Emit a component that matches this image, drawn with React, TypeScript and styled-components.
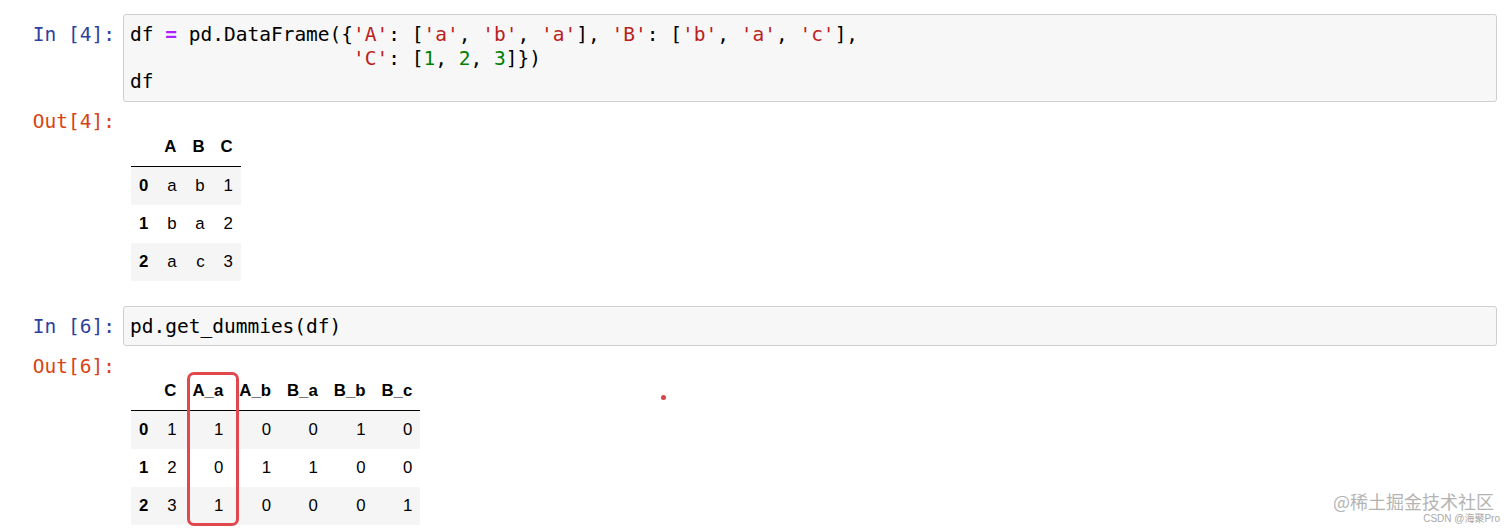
import React from "react";
import styled, { createGlobalStyle } from "styled-components";

const Global = createGlobalStyle`
  html, body { margin: 0; padding: 0; background: #fff; }
  body { font-family: "Liberation Sans", Arial, sans-serif; }
`;

const Page = styled.div`
  position: relative;
  width: 1512px;
  height: 530px;
  overflow: hidden;
  box-sizing: border-box;
  padding-top: 14px;
  background: #fff;
`;

const NotebookCell = styled.section<{ $gapAfter: number }>`
  margin-bottom: ${(p) => p.$gapAfter}px;
`;

const Row = styled.div`
  display: flex;
  align-items: flex-start;
`;

const Prompt = styled.div<{ $kind: "in" | "out"; $top: number }>`
  flex: 0 0 123px;
  box-sizing: border-box;
  padding: ${(p) => p.$top}px 8px 0 0;
  text-align: right;
  font-family: "DejaVu Sans Mono", monospace;
  font-size: 19.5px;
  line-height: 23.5px;
  white-space: pre;
  color: ${(p) => (p.$kind === "in" ? "#303F9F" : "#D84315")};
`;

const InputArea = styled.div`
  flex: 1;
  margin-right: 15px;
  background: #f7f7f7;
  border: 1px solid #cfcfcf;
  border-radius: 3px;
  padding: 8px 6px 7px;
  font-family: "DejaVu Sans Mono", monospace;
  font-size: 19.5px;
  line-height: 23.5px;
  color: #000;
  white-space: pre;
`;

const CodeLine = styled.div`
  min-height: 23.5px;
`;

const Op = styled.span`
  color: #aa22ff;
  font-weight: bold;
`;

const Str = styled.span`
  color: #ba2121;
`;

const Num = styled.span`
  color: #008000;
`;

const OutputArea = styled.div`
  flex: 1;
`;

const TableWrap = styled.div`
  position: relative;
  width: fit-content;
  margin: 26px 0 0 8px;
`;

const DataTable = styled.table`
  border-collapse: collapse;
  border-spacing: 0;
  font-family: "Liberation Sans", Arial, sans-serif;
  font-size: 16.8px;
  color: #000;
`;

const THead = styled.thead`
  border-bottom: 1px solid #000;
`;

const HeadCell = styled.th`
  padding: 8px;
  line-height: 22px;
  text-align: right;
  font-weight: bold;
  white-space: nowrap;
`;

const BodyRow = styled.tr<{ $striped: boolean }>`
  background: ${(p) => (p.$striped ? "#f5f5f5" : "transparent")};
`;

const DataCell = styled.td`
  padding: 8px;
  line-height: 22px;
  text-align: right;
`;

const ColumnMark = styled.div<{ $left: number; $width: number; $height: number }>`
  position: absolute;
  left: ${(p) => p.$left}px;
  top: 0;
  width: ${(p) => p.$width}px;
  height: ${(p) => p.$height}px;
  box-sizing: border-box;
  border: 3px solid #e0484d;
  border-radius: 7px;
  pointer-events: none;
`;

const RedDot = styled.span`
  position: absolute;
  left: 661px;
  top: 395px;
  width: 5px;
  height: 5px;
  border-radius: 50%;
  background: #d9444b;
`;

const Watermark = styled.div`
  position: absolute;
  right: 12px;
  bottom: 5px;
  display: flex;
  flex-direction: column;
  align-items: flex-end;
  gap: 2px;
  pointer-events: none;
`;

const MarkMain = styled.span`
  margin-right: 6px;
  font-family: "Noto Sans CJK SC", "Liberation Sans", sans-serif;
  font-size: 18px;
  line-height: 20px;
  color: #b4b4b4;
`;

const MarkSub = styled.span`
  font-family: "Liberation Sans", "Noto Sans CJK SC", sans-serif;
  font-size: 10px;
  line-height: 12px;
  color: #a8a8a8;
`;

type Table = { columns: string[]; rows: (string | number)[][] };

const table1: Table = {
  columns: ["A", "B", "C"],
  rows: [
    ["a", "b", 1],
    ["b", "a", 2],
    ["a", "c", 3],
  ],
};

const table2: Table = {
  columns: ["C", "A_a", "A_b", "B_a", "B_b", "B_c"],
  rows: [
    [1, 1, 0, 0, 1, 0],
    [2, 0, 1, 1, 0, 0],
    [3, 1, 0, 0, 0, 1],
  ],
};

function Frame({ data }: { data: Table }) {
  return (
    <DataTable>
      <THead>
        <tr>
          <HeadCell />
          {data.columns.map((c) => (
            <HeadCell key={c}>{c}</HeadCell>
          ))}
        </tr>
      </THead>
      <tbody>
        {data.rows.map((r, i) => (
          <BodyRow key={i} $striped={i % 2 === 0}>
            <HeadCell>{i}</HeadCell>
            {r.map((v, j) => (
              <DataCell key={j}>{v}</DataCell>
            ))}
          </BodyRow>
        ))}
      </tbody>
    </DataTable>
  );
}

export default function App() {
  return (
    <Page>
      <Global />
      <NotebookCell $gapAfter={25}>
        <Row>
          <Prompt $kind="in" $top={9}>In [4]:</Prompt>
          <InputArea>
            <CodeLine>
              df <Op>=</Op> pd.DataFrame({"{"}
              <Str>'A'</Str>: [<Str>'a'</Str>, <Str>'b'</Str>, <Str>'a'</Str>], <Str>'B'</Str>: [
              <Str>'b'</Str>, <Str>'a'</Str>, <Str>'c'</Str>],
            </CodeLine>
            <CodeLine>
              {"                   "}
              <Str>'C'</Str>: [<Num>1</Num>, <Num>2</Num>, <Num>3</Num>]{"}"})
            </CodeLine>
            <CodeLine>df</CodeLine>
          </InputArea>
        </Row>
        <Row>
          <Prompt $kind="out" $top={8}>Out[4]:</Prompt>
          <OutputArea>
            <TableWrap>
              <Frame data={table1} />
            </TableWrap>
          </OutputArea>
        </Row>
      </NotebookCell>
      <NotebookCell $gapAfter={0}>
        <Row>
          <Prompt $kind="in" $top={9}>In [6]:</Prompt>
          <InputArea>
            <CodeLine>pd.get_dummies(df)</CodeLine>
          </InputArea>
        </Row>
        <Row>
          <Prompt $kind="out" $top={9}>Out[6]:</Prompt>
          <OutputArea>
            <TableWrap>
              <Frame data={table2} />
              <ColumnMark $left={56} $width={52} $height={154} />
            </TableWrap>
          </OutputArea>
        </Row>
      </NotebookCell>
      <RedDot />
      <Watermark>
        <MarkMain>@稀土掘金技术社区</MarkMain>
        <MarkSub>CSDN @海聚Pro</MarkSub>
      </Watermark>
    </Page>
  );
}
